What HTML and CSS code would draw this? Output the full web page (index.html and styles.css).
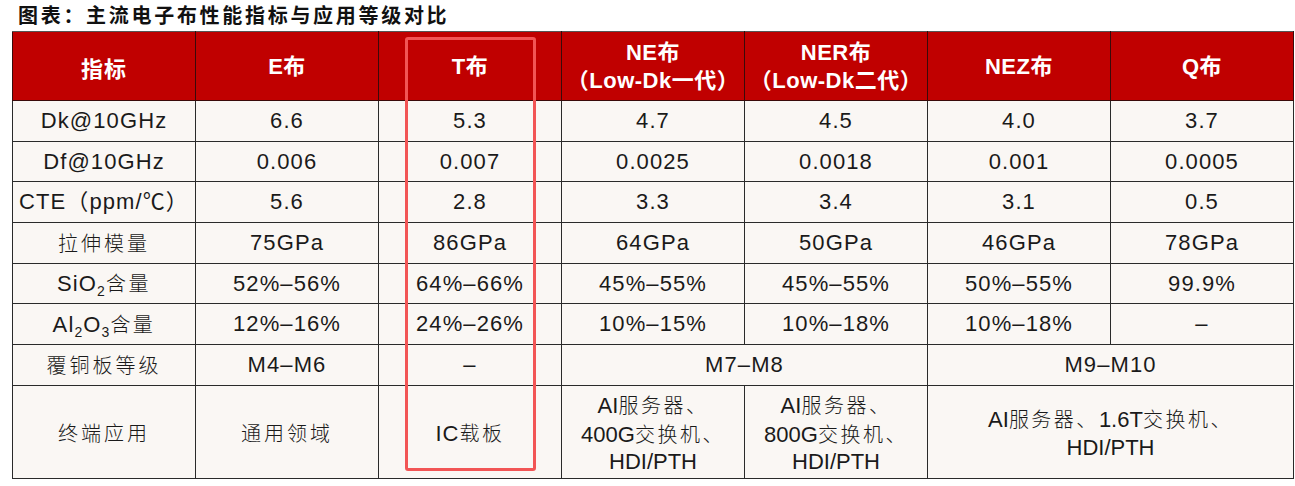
FILE: index.html
```html
<!DOCTYPE html>
<html lang="zh">
<head>
<meta charset="utf-8">
<link rel="stylesheet" href="styles.css">
</head>
<body>
<div class="title">图表：主流电子布性能指标与应用等级对比</div>
<div class="wrap">
<table class="grid">
<colgroup><col><col><col><col><col><col><col></colgroup>
<thead>
<tr>
<th class="cjk">指标</th>
<th>E布</th>
<th>T布</th>
<th>NE布<br>（Low-Dk一代）</th>
<th>NER布<br>（Low-Dk二代）</th>
<th>NEZ布</th>
<th>Q布</th>
</tr>
</thead>
<tbody>
<tr><td>Dk@10GHz</td><td>6.6</td><td>5.3</td><td class="g">4.7</td><td class="g">4.5</td><td>4.0</td><td>3.7</td></tr>
<tr><td>Df@10GHz</td><td>0.006</td><td>0.007</td><td class="g">0.0025</td><td class="g">0.0018</td><td>0.001</td><td>0.0005</td></tr>
<tr><td>CTE（ppm/℃）</td><td>5.6</td><td>2.8</td><td class="g">3.3</td><td class="g">3.4</td><td>3.1</td><td>0.5</td></tr>
<tr><td class="cjk">拉伸模量</td><td>75GPa</td><td>86GPa</td><td class="g">64GPa</td><td class="g">50GPa</td><td>46GPa</td><td>78GPa</td></tr>
<tr><td>SiO<sub>2</sub><span class="cj">含量</span></td><td>52%–56%</td><td>64%–66%</td><td class="g">45%–55%</td><td class="g">45%–55%</td><td>50%–55%</td><td>99.9%</td></tr>
<tr><td>Al<sub>2</sub>O<sub>3</sub><span class="cj">含量</span></td><td>12%–16%</td><td>24%–26%</td><td class="g">10%–15%</td><td class="g">10%–18%</td><td>10%–18%</td><td>–</td></tr>
<tr><td class="cjk">覆铜板等级</td><td>M4–M6</td><td>–</td><td colspan="2" class="g">M7–M8</td><td colspan="2">M9–M10</td></tr>
<tr class="last"><td class="cjk">终端应用</td><td class="cjk">通用领域</td><td>IC<span class="cj">载板</span></td><td class="g nar">AI<span class="cj">服务器、</span><br>400G<span class="cj">交换机、</span><br>HDI/PTH</td><td class="g nar">AI<span class="cj">服务器、</span><br>800G<span class="cj">交换机、</span><br>HDI/PTH</td><td colspan="2" class="nar">AI<span class="cj">服务器、</span>1.6T<span class="cj">交换机、</span><br>HDI/PTH</td></tr>
</tbody>
</table>
<div class="hl"></div>
</div>
</body>
</html>
```

FILE: styles.css
```css
html, body {
  margin: 0;
  padding: 0;
  background: #ffffff;
}
body {
  font-family: "Liberation Sans", Arial, "Noto Sans CJK SC", sans-serif;
  color: #1a1a1a;
}
.title {
  height: 31px;
  padding-left: 18px;
  font-family: "Noto Sans CJK SC", sans-serif;
  font-weight: 700;
  font-size: 20px;
  line-height: 30px;
  letter-spacing: 2.7px;
  color: #111;
  box-sizing: border-box;
}
.wrap {
  position: relative;
  margin-left: 12px;
  width: 1282px;
}
.grid {
  border-collapse: collapse;
  table-layout: fixed;
  width: 1282px;
}
.grid col {
  width: 183px;
}
.grid th,
.grid td {
  border: 1px solid #2a2a2a;
  padding: 0;
  text-align: center;
  vertical-align: middle;
}
.grid th {
  background: #c00000;
  color: #ffffff;
  font-weight: 700;
  font-size: 22px;
  line-height: 28px;
  height: 66px;
  padding-top: 2px;
  letter-spacing: 0.5px;
  border-color: #3a0a0a;
  border-top-color: #555;
}
.grid td {
  background: #faf7f4;
  font-size: 22px;
  height: 39.7px;
  line-height: 24px;
  letter-spacing: 1.1px;
}
.grid td.g {
  border-left-color: #7a7a7a;
}
.grid .cjk,
.grid .cj {
  font-family: "Noto Sans CJK SC", sans-serif;
  font-weight: 300;
  font-size: 20px;
  letter-spacing: 3px;
}
.grid th.cjk {
  font-weight: 700;
  font-size: 22px;
  letter-spacing: 1px;
}
.grid td .cj {
  letter-spacing: 2.5px;
}
.grid sub {
  font-size: 14px;
  vertical-align: -5px;
  line-height: 0;
}
.grid tr.last td {
  height: 89px;
  padding-top: 3px;
}
.grid td.nar {
  line-height: 27.5px;
  font-size: 22px;
  letter-spacing: 0;
}
.hl {
  position: absolute;
  left: 393px;
  top: 6px;
  width: 131px;
  height: 434px;
  border: 3px solid #f25555;
  border-radius: 3px;
  box-sizing: border-box;
  pointer-events: none;
}
```
